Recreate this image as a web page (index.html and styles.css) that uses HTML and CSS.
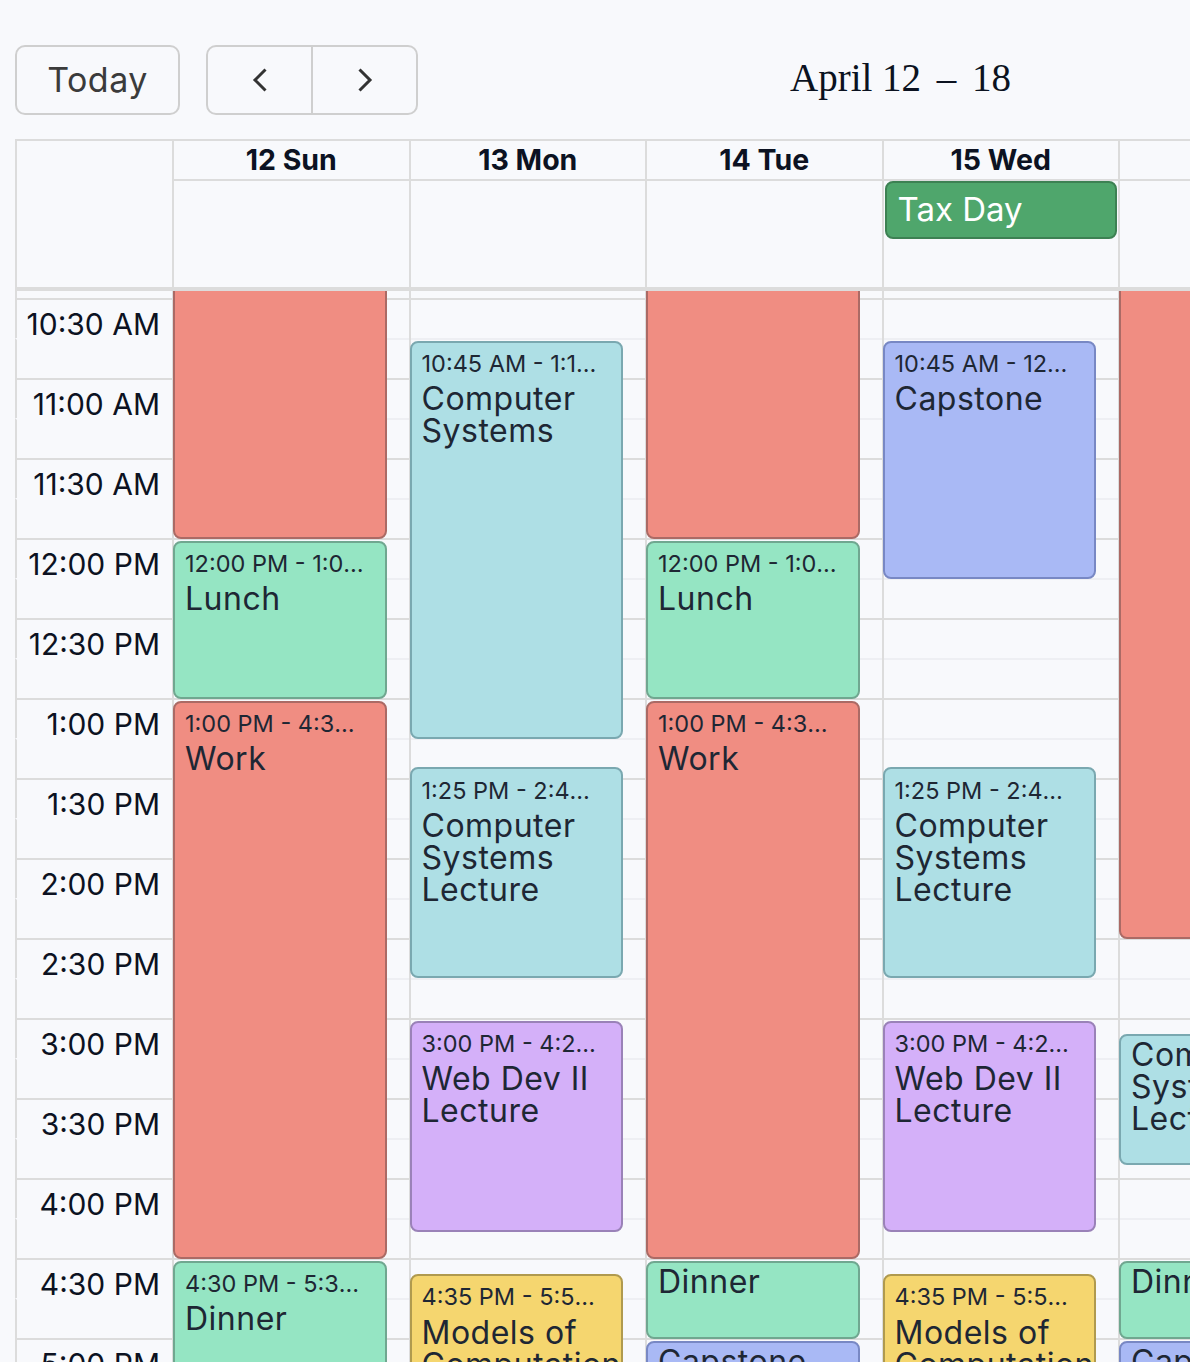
FILE: index.html
```html
<!DOCTYPE html>
<html lang="en">
<head>
<meta charset="utf-8">
<title>Calendar</title>
<link rel="stylesheet" href="styles.css">
</head>
<body>
<div class="page">
  <div class="toolbar">
    <button class="btn today">Today</button>
    <div class="nav-group">
      <button class="nav-btn" aria-label="Previous week"><svg width="16" height="24" viewBox="0 0 16 24"><path d="M13.5 1.5 L3 12 L13.5 22.5" fill="none" stroke="#333" stroke-width="3"/></svg></button>
      <button class="nav-btn" aria-label="Next week"><svg width="16" height="24" viewBox="0 0 16 24"><path d="M2.5 1.5 L13 12 L2.5 22.5" fill="none" stroke="#333" stroke-width="3"/></svg></button>
    </div>
    <h2 class="title">April 12 <span class="dash">–</span> 18</h2>
  </div>

  <div class="cal">
    <div class="head">
      <div class="head-axis"></div>
      <div class="dayname">12 Sun</div>
      <div class="dayname">13 Mon</div>
      <div class="dayname">14 Tue</div>
      <div class="dayname">15 Wed</div>
      <div class="dayname">16 Thu</div>
      <div class="dayname">17 Fri</div>
      <div class="dayname">18 Sat</div>
      <div class="allday"></div>
      <div class="allday"></div>
      <div class="allday"></div>
      <div class="allday"><div class="tag">Tax Day</div></div>
      <div class="allday"></div>
      <div class="allday"></div>
      <div class="allday"></div>
    </div>
    <div class="divider"></div>

    <div class="body">
      <div class="slots">
        <div class="slot partial"><div class="axis"></div><div class="lane"></div></div>
        <div class="slot major"><div class="axis"><span class="label">10:30 AM</span></div><div class="lane"></div></div>
        <div class="slot minor"><div class="axis"></div><div class="lane"></div></div>
        <div class="slot major"><div class="axis"><span class="label">11:00 AM</span></div><div class="lane"></div></div>
        <div class="slot minor"><div class="axis"></div><div class="lane"></div></div>
        <div class="slot major"><div class="axis"><span class="label">11:30 AM</span></div><div class="lane"></div></div>
        <div class="slot minor"><div class="axis"></div><div class="lane"></div></div>
        <div class="slot major"><div class="axis"><span class="label">12:00 PM</span></div><div class="lane"></div></div>
        <div class="slot minor"><div class="axis"></div><div class="lane"></div></div>
        <div class="slot major"><div class="axis"><span class="label">12:30 PM</span></div><div class="lane"></div></div>
        <div class="slot minor"><div class="axis"></div><div class="lane"></div></div>
        <div class="slot major"><div class="axis"><span class="label">1:00 PM</span></div><div class="lane"></div></div>
        <div class="slot minor"><div class="axis"></div><div class="lane"></div></div>
        <div class="slot major"><div class="axis"><span class="label">1:30 PM</span></div><div class="lane"></div></div>
        <div class="slot minor"><div class="axis"></div><div class="lane"></div></div>
        <div class="slot major"><div class="axis"><span class="label">2:00 PM</span></div><div class="lane"></div></div>
        <div class="slot minor"><div class="axis"></div><div class="lane"></div></div>
        <div class="slot major"><div class="axis"><span class="label">2:30 PM</span></div><div class="lane"></div></div>
        <div class="slot minor"><div class="axis"></div><div class="lane"></div></div>
        <div class="slot major"><div class="axis"><span class="label">3:00 PM</span></div><div class="lane"></div></div>
        <div class="slot minor"><div class="axis"></div><div class="lane"></div></div>
        <div class="slot major"><div class="axis"><span class="label">3:30 PM</span></div><div class="lane"></div></div>
        <div class="slot minor"><div class="axis"></div><div class="lane"></div></div>
        <div class="slot major"><div class="axis"><span class="label">4:00 PM</span></div><div class="lane"></div></div>
        <div class="slot minor"><div class="axis"></div><div class="lane"></div></div>
        <div class="slot major"><div class="axis"><span class="label">4:30 PM</span></div><div class="lane"></div></div>
        <div class="slot minor"><div class="axis"></div><div class="lane"></div></div>
        <div class="slot major"><div class="axis"><span class="label">5:00 PM</span></div><div class="lane"></div></div>
        <div class="slot minor"><div class="axis"></div><div class="lane"></div></div>
        <div class="slot major"><div class="axis"><span class="label">5:30 PM</span></div><div class="lane"></div></div>
        <div class="slot minor"><div class="axis"></div><div class="lane"></div></div>
      </div>

      <div class="cols">
        <div class="col">
          <div class="ev red" style="top:-60px;height:307.5px"></div>
          <div class="ev green" style="top:249.5px;height:158px"><div class="ev-time">12:00 PM - 1:00 PM</div><div class="ev-title">Lunch</div></div>
          <div class="ev red" style="top:409.5px;height:558px"><div class="ev-time">1:00 PM - 4:30 PM</div><div class="ev-title">Work</div></div>
          <div class="ev green" style="top:969.5px;height:158px"><div class="ev-time">4:30 PM - 5:30 PM</div><div class="ev-title">Dinner</div></div>
        </div>
        <div class="col">
          <div class="ev teal" style="top:49.5px;height:398px"><div class="ev-time">10:45 AM - 1:15 PM</div><div class="ev-title">Computer Systems</div></div>
          <div class="ev teal" style="top:476.17px;height:211.33px"><div class="ev-time">1:25 PM - 2:45 PM</div><div class="ev-title">Computer Systems Lecture</div></div>
          <div class="ev purple" style="top:729.5px;height:211.33px"><div class="ev-time">3:00 PM - 4:20 PM</div><div class="ev-title">Web Dev II Lecture</div></div>
          <div class="ev yellow" style="top:982.83px;height:198px"><div class="ev-time">4:35 PM - 5:50 PM</div><div class="ev-title">Models of Computation</div></div>
        </div>
        <div class="col">
          <div class="ev red" style="top:-60px;height:307.5px"></div>
          <div class="ev green" style="top:249.5px;height:158px"><div class="ev-time">12:00 PM - 1:00 PM</div><div class="ev-title">Lunch</div></div>
          <div class="ev red" style="top:409.5px;height:558px"><div class="ev-time">1:00 PM - 4:30 PM</div><div class="ev-title">Work</div></div>
          <div class="ev green short" style="top:969.5px;height:78px"><div class="ev-title">Dinner</div></div>
          <div class="ev blue short" style="top:1049.5px;height:158px"><div class="ev-title">Capstone</div></div>
        </div>
        <div class="col">
          <div class="ev blue" style="top:49.5px;height:238px"><div class="ev-time">10:45 AM - 12:15 PM</div><div class="ev-title">Capstone</div></div>
          <div class="ev teal" style="top:476.17px;height:211.33px"><div class="ev-time">1:25 PM - 2:45 PM</div><div class="ev-title">Computer Systems Lecture</div></div>
          <div class="ev purple" style="top:729.5px;height:211.33px"><div class="ev-time">3:00 PM - 4:20 PM</div><div class="ev-title">Web Dev II Lecture</div></div>
          <div class="ev yellow" style="top:982.83px;height:198px"><div class="ev-time">4:35 PM - 5:50 PM</div><div class="ev-title">Models of Computation</div></div>
        </div>
        <div class="col">
          <div class="ev red" style="top:-60px;height:707.5px"></div>
          <div class="ev teal short" style="top:742.83px;height:131.33px"><div class="ev-title">Computer Systems Lecture</div></div>
          <div class="ev green short" style="top:969.5px;height:78px"><div class="ev-title">Dinner</div></div>
          <div class="ev blue short" style="top:1049.5px;height:158px"><div class="ev-title">Capstone</div></div>
        </div>
        <div class="col"></div>
        <div class="col"></div>
      </div>
    </div>
  </div>
</div>
</body>
</html>
```

FILE: styles.css
```css
html, body {
  margin: 0;
  overflow: hidden;
  background: #f8f9fc;
}

body {
  font-family: Inter, "Noto Sans", sans-serif;
  color: #0c1222;
}

.page {
  padding: 45px 0 0 15px;
  width: 1830px;
}

/* toolbar */
.toolbar {
  display: flex;
  align-items: center;
  height: 70px;
}

.btn,
.nav-btn {
  font-family: Inter, "Noto Sans", sans-serif;
  background: transparent;
  color: #3b3b3b;
  margin: 0;
  cursor: pointer;
}

.today {
  width: 165px;
  height: 70px;
  box-sizing: border-box;
  border: 2px solid #cfcfcf;
  border-radius: 10px;
  font-size: 34px;
  letter-spacing: 0.5px;
  padding: 0 0 2px;
}

.nav-group {
  display: flex;
  margin-left: 26px;
  height: 70px;
  box-sizing: border-box;
  border: 2px solid #cfcfcf;
  border-radius: 10px;
}

.nav-btn {
  box-sizing: content-box;
  width: 103px;
  border: 0;
  padding: 0;
  display: flex;
  align-items: center;
  justify-content: center;
}

.nav-btn + .nav-btn {
  border-left: 2px solid #cfcfcf;
}

.title {
  margin: 0 0 0 372px;
  padding-bottom: 6px;
  font-family: "Liberation Serif", "Times New Roman", serif;
  font-weight: 400;
  font-size: 39px;
  color: #0b1220;
  white-space: pre;
}

.dash {
  margin: 0 6px;
}

/* calendar */
.cal {
  width: 1812.5px;
  margin-top: 24px;
  border-top: 2px solid #dcdcdc;
}

.head {
  display: grid;
  grid-template-columns: 157px repeat(7, 236.5px);
  grid-template-rows: 40px 106px;
}

.head-axis {
  grid-row: 1 / span 2;
  border-left: 2px solid #dcdcdc;
}

.dayname {
  border-left: 2px solid #dcdcdc;
  border-bottom: 2px solid #dcdcdc;
  font-weight: 700;
  font-size: 28.5px;
  line-height: 38px;
  text-align: center;
  color: #0c1222;
  white-space: nowrap;
}

.allday {
  border-left: 2px solid #dcdcdc;
  padding: 0 1.5px 0 1px;
}

.tag {
  height: 58px;
  box-sizing: border-box;
  border: 2px solid #3d8153;
  border-radius: 8px;
  background: #4fa66c;
  color: #ffffff;
  font-size: 33px;
  line-height: 52px;
  padding: 0 11px;
  white-space: nowrap;
  overflow: hidden;
}

.divider {
  height: 4px;
  background: #dcdcdc;
}

.body {
  position: relative;
  height: 1071px;
  overflow: hidden;
}

.slot {
  display: flex;
  height: 40px;
}

.slot.partial {
  height: 7px;
}

.axis {
  width: 157px;
  flex: none;
  box-sizing: border-box;
  border-left: 2px solid #dcdcdc;
  border-top: 2px solid transparent;
  text-align: right;
  padding-right: 12px;
}

.lane {
  flex: 1;
  box-sizing: border-box;
  border-top: 2px solid transparent;
}

.slot.partial .axis,
.slot.partial .lane {
  border-top: 0;
}

.slot.major .axis,
.slot.major .lane {
  border-top-color: #dcdcdc;
}

.slot.minor .lane {
  border-top-color: #eeeff3;
}

.label {
  display: block;
  font-size: 30px;
  line-height: 38px;
  padding-top: 5px;
  white-space: nowrap;
  color: #0c1222;
}

.cols {
  position: absolute;
  top: 0;
  bottom: 0;
  left: 157px;
  display: grid;
  grid-template-columns: repeat(7, 236.5px);
}

.col {
  position: relative;
  border-left: 2px solid #dcdcdc;
}

/* events */
.ev {
  position: absolute;
  left: -1px;
  right: 22px;
  box-sizing: border-box;
  border: 2px solid;
  border-radius: 8px;
  padding: 6.4px 20px 0 10px;
  overflow: hidden;
  color: #1e2734;
}

.ev.short {
  padding-top: 3.5px;
}

.ev-time {
  font-size: 23.5px;
  line-height: 30px;
  white-space: nowrap;
  overflow: hidden;
  text-overflow: ellipsis;
}

.ev-title {
  font-size: 32px;
  letter-spacing: 0.5px;
  line-height: 32px;
  margin-top: 4.3px;
  margin-right: -12px;
}

.ev.short .ev-title {
  margin-top: 0;
}

.red { background: #f08d82; border-color: #ab6a65; }
.green { background: #95e5c3; border-color: #70a790; }
.teal { background: #aedfe5; border-color: #7aa8b0; }
.blue { background: #a9b9f5; border-color: #7888c4; }
.purple { background: #d4b0f9; border-color: #9a82b8; }
.yellow { background: #f5d66f; border-color: #b09a4e; }
```
